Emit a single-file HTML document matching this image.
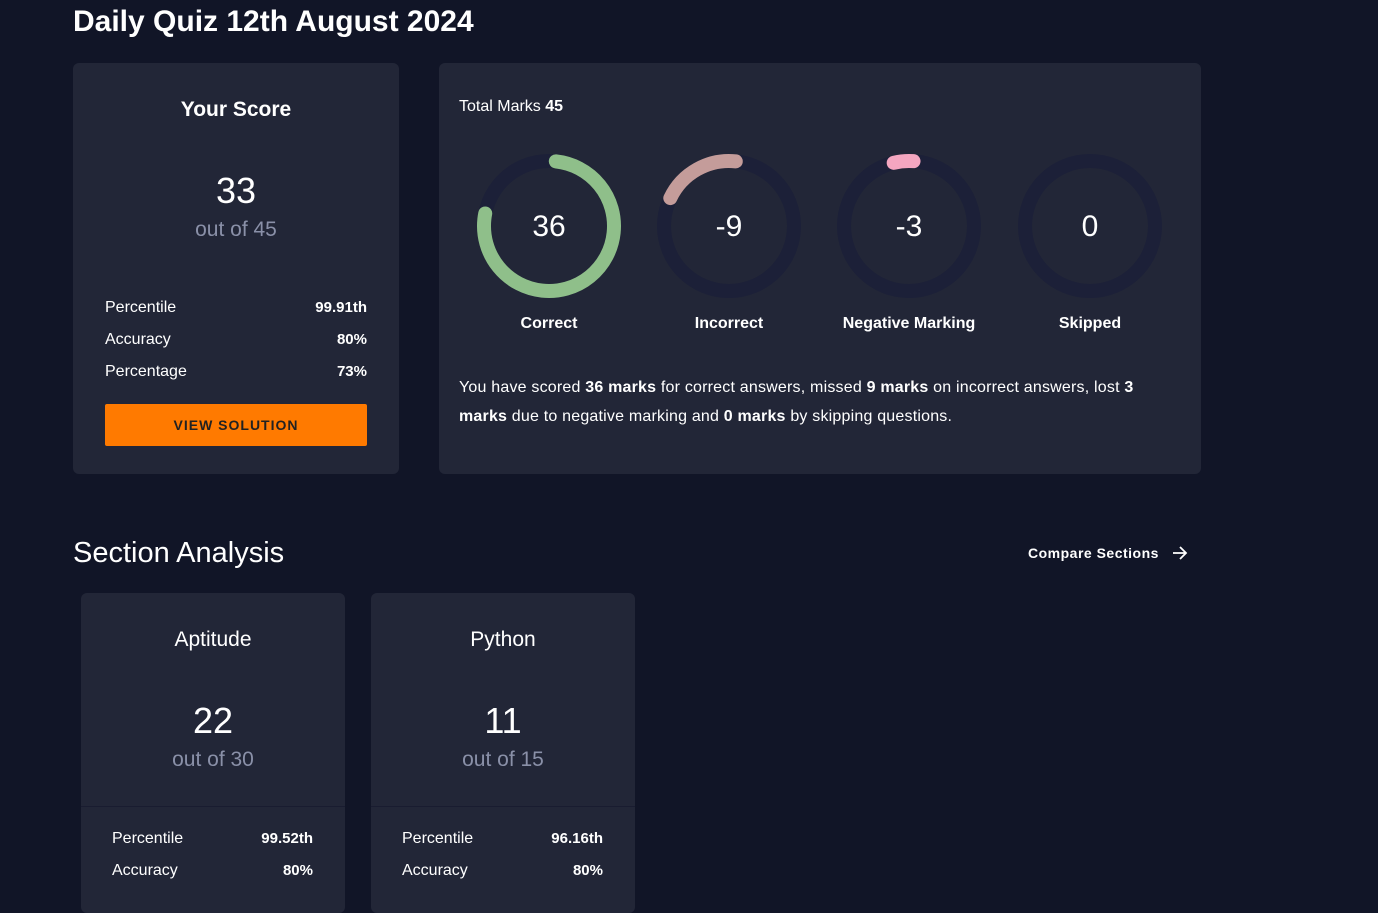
<!DOCTYPE html>
<html><head><meta charset="utf-8"><style>
*{box-sizing:border-box;margin:0;padding:0}
body{width:1378px;height:886px;overflow:hidden;background:#111527;font-family:"Liberation Sans",sans-serif;color:#fff;position:relative}
.abs{position:absolute}
.card{position:absolute;background:#222637;border-radius:6px}
.c{text-align:center;width:100%;position:absolute;left:0}
.row{position:absolute;font-size:16px;display:flex;justify-content:space-between}
.row b{font-weight:bold;font-size:15px}
.gray{color:#8a90a8}
.lbl{position:absolute;width:180px;text-align:center;font-size:16px;font-weight:bold;top:315px}
.num{position:absolute;width:180px;text-align:center;font-size:30px;top:210px}
</style></head><body>
<div class="abs" style="left:73px;top:5px;font-size:30px;font-weight:bold">Daily Quiz 12th August 2024</div>

<div class="card" style="left:73px;top:63px;width:326px;height:411px">
 <div class="c" style="top:35px;font-size:21px;font-weight:bold">Your Score</div>
 <div class="c" style="top:107px;font-size:36px">33</div>
 <div class="c gray" style="top:155px;font-size:21px">out of 45</div>
 <div class="row" style="left:32px;right:32px;top:236px"><span>Percentile</span><b>99.91th</b></div>
 <div class="row" style="left:32px;right:32px;top:268px"><span>Accuracy</span><b>80%</b></div>
 <div class="row" style="left:32px;right:32px;top:300px"><span>Percentage</span><b>73%</b></div>
 <div class="abs" style="left:32px;top:341px;width:262px;height:42px;background:#ff7a00;border-radius:2px;color:#222;font-weight:bold;font-size:14px;letter-spacing:1px;text-align:center;line-height:42px">VIEW SOLUTION</div>
</div>

<div class="card" style="left:439px;top:63px;width:762px;height:411px"></div>
<div class="abs" style="left:459px;top:98px;font-size:16px">Total Marks <b>45</b></div>
<svg class="abs" style="left:0;top:0" width="1378" height="400">
 <g fill="none" stroke-width="14" stroke-linecap="round">
  <circle cx="549" cy="226" r="65" stroke="#1c2038"/>
  <circle cx="729" cy="226" r="65" stroke="#1c2038"/>
  <circle cx="909" cy="226" r="65" stroke="#1c2038"/>
  <circle cx="1090" cy="226" r="65" stroke="#1c2038"/>
  <circle cx="549" cy="226" r="65" stroke="#8fbf8a" stroke-dasharray="312 500" transform="rotate(-84 549 226)"/>
  <circle cx="729" cy="226" r="65" stroke="#c49c9a" stroke-dasharray="80 500" transform="translate(1458 0) scale(-1 1) rotate(-96 729 226)"/>
  <circle cx="909" cy="226" r="65" stroke="#f4a6c0" stroke-dasharray="20 500" transform="translate(1818 0) scale(-1 1) rotate(-94 909 226)"/>
 </g>
</svg>
<div class="num" style="left:459px">36</div>
<div class="num" style="left:639px">-9</div>
<div class="num" style="left:819px">-3</div>
<div class="num" style="left:1000px">0</div>
<div class="lbl" style="left:459px">Correct</div>
<div class="lbl" style="left:639px">Incorrect</div>
<div class="lbl" style="left:819px">Negative Marking</div>
<div class="lbl" style="left:1000px">Skipped</div>
<div class="abs" style="left:459px;top:373px;width:720px;font-size:16px;line-height:29px;letter-spacing:0.2px">You have scored <b>36 marks</b> for correct answers, missed <b>9 marks</b> on incorrect answers, lost <b>3 marks</b> due to negative marking and <b>0 marks</b> by skipping questions.</div>

<div class="abs" style="left:73px;top:537px;font-size:29px">Section Analysis</div>
<div class="abs" style="left:1028px;top:545px;font-size:14px;font-weight:bold;letter-spacing:0.5px">Compare Sections</div>
<svg class="abs" style="left:1172px;top:546px" width="16" height="14"><path d="M1 7H14M8 1L14 7L8 13" stroke="#fff" stroke-width="1.8" fill="none"/></svg>

<div class="card" style="left:81px;top:593px;width:264px;height:320px">
 <div class="c" style="top:35px;font-size:21px">Aptitude</div>
 <div class="c" style="top:107px;font-size:36px">22</div>
 <div class="c gray" style="top:155px;font-size:21px">out of 30</div>
 <div class="abs" style="left:0;right:0;top:213px;height:1px;background:#191c30"></div>
 <div class="row" style="left:31px;right:32px;top:237px"><span>Percentile</span><b>99.52th</b></div>
 <div class="row" style="left:31px;right:32px;top:269px"><span>Accuracy</span><b>80%</b></div>
</div>
<div class="card" style="left:371px;top:593px;width:264px;height:320px">
 <div class="c" style="top:35px;font-size:21px">Python</div>
 <div class="c" style="top:107px;font-size:36px">11</div>
 <div class="c gray" style="top:155px;font-size:21px">out of 15</div>
 <div class="abs" style="left:0;right:0;top:213px;height:1px;background:#191c30"></div>
 <div class="row" style="left:31px;right:32px;top:237px"><span>Percentile</span><b>96.16th</b></div>
 <div class="row" style="left:31px;right:32px;top:269px"><span>Accuracy</span><b>80%</b></div>
</div>
</body></html>
